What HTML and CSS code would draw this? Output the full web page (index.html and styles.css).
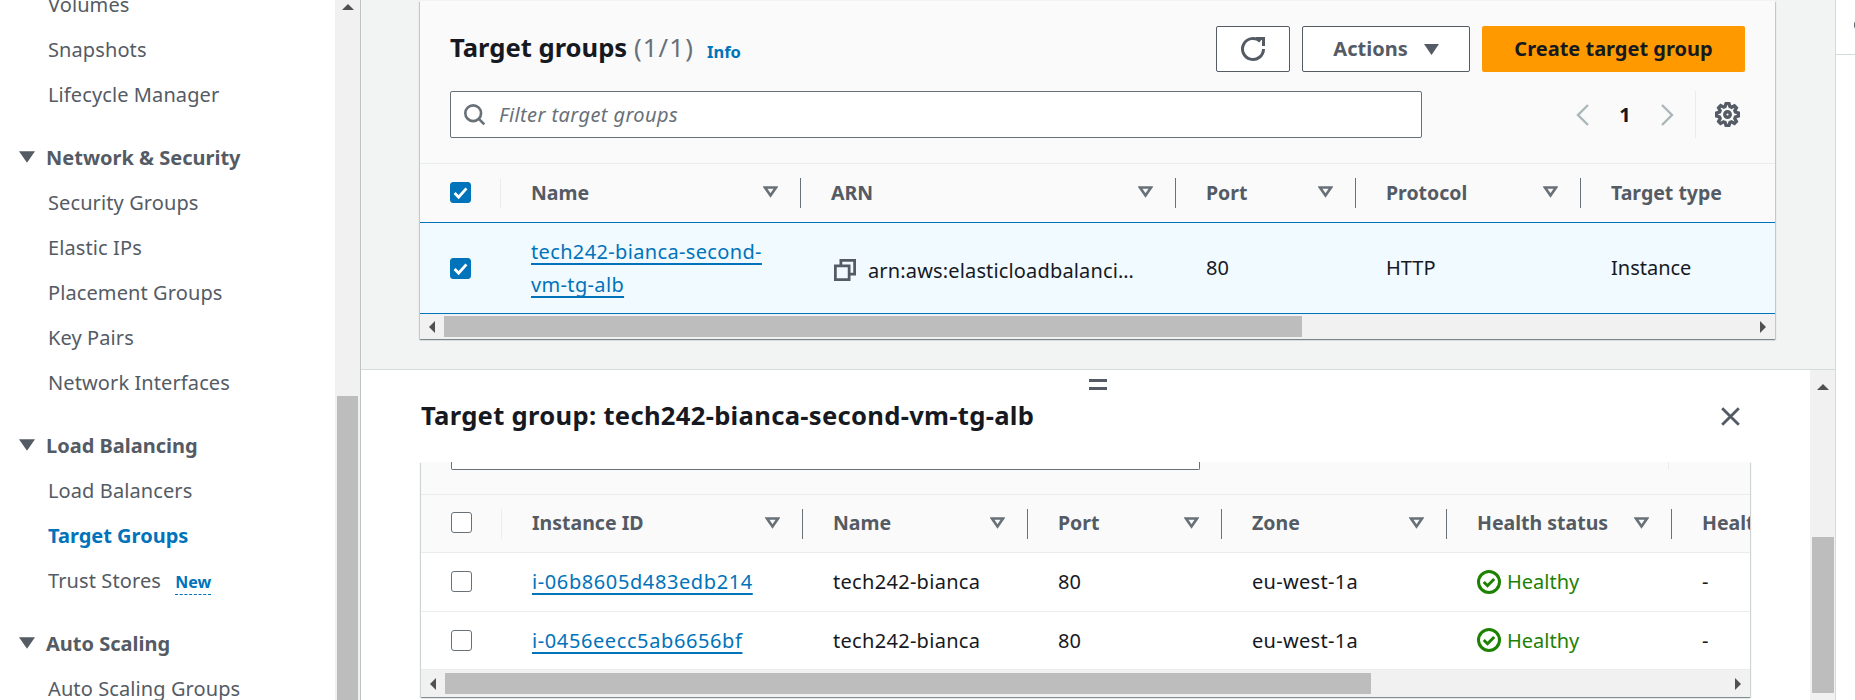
FILE: index.html
```html
<!DOCTYPE html>
<html lang="en">
<head>
    <meta charset="UTF-8">
    <title>Target groups</title>
    <link rel="stylesheet" href="styles.css">
</head>
<body>

<div class="app">

    <!-- Left navigation -->
    <nav class="side">
        <div class="side-list">
            <a class="side-item">Volumes</a>
            <a class="side-item">Snapshots</a>
            <a class="side-item">Lifecycle Manager</a>

            <div class="side-head"><svg class="caret-solid" viewBox="0 0 15 11"><path d="M0 0h15L7.5 11z"/></svg>Network &amp; Security</div>
            <a class="side-item">Security Groups</a>
            <a class="side-item">Elastic IPs</a>
            <a class="side-item">Placement Groups</a>
            <a class="side-item">Key Pairs</a>
            <a class="side-item">Network Interfaces</a>

            <div class="side-head"><svg class="caret-solid" viewBox="0 0 15 11"><path d="M0 0h15L7.5 11z"/></svg>Load Balancing</div>
            <a class="side-item">Load Balancers</a>
            <a class="side-item active">Target Groups</a>
            <a class="side-item">Trust Stores <span class="new-tag">New</span></a>

            <div class="side-head"><svg class="caret-solid" viewBox="0 0 15 11"><path d="M0 0h15L7.5 11z"/></svg>Auto Scaling</div>
            <a class="side-item">Auto Scaling Groups</a>
        </div>
    </nav>
    <div class="vscroll side-scroll">
        <span class="arrow-up"></span>
        <span class="vthumb side-thumb"></span>
    </div>

    <main class="main">
        <!-- Target groups list -->
        <section class="top-zone">
            <div class="card top-card">
                <div class="title-row">
                    <h1 class="card-title">Target groups <span class="count">(1/1)</span></h1>
                    <a class="info">Info</a>
                    <div class="actions">
                        <button class="btn btn-icon">
                            <svg class="icon" viewBox="0 0 16 16"><path d="M15 8a7 7 0 1 1-2.2-5.1"/><path d="M10 1h5v5"/></svg>
                        </button>
                        <button class="btn btn-actions">Actions <svg class="caret-btn" viewBox="0 0 15 11"><path d="M0 0h15L7.5 11z"/></svg></button>
                        <button class="btn btn-primary">Create target group</button>
                    </div>
                </div>
                <div class="filter-row">
                    <div class="filter">
                        <svg class="icon-search" viewBox="0 0 16 16"><circle cx="7" cy="7" r="6"/><path d="M11.5 11.5L15.5 15.5"/></svg>
                        <span class="placeholder">Filter target groups</span>
                    </div>
                    <div class="pager">
                        <svg class="chev" viewBox="0 0 16 24"><path d="M13 2L3 12l10 10"/></svg>
                        <span class="page-no">1</span>
                        <svg class="chev" viewBox="0 0 16 24"><path d="M3 2l10 10L3 22"/></svg>
                    </div>
                    <div class="prefs">
                        <svg class="icon-gear" viewBox="-1 -1 18 18"><path d="M13.3 5.2l1.1-2.1L13 1.7l-2.1 1.1c-.3-.2-.7-.3-1.1-.4L9 0H7l-.8 2.3c-.3.1-.7.2-1 .4L3.1 1.6 1.6 3.1l1.1 2.1c-.2.3-.3.7-.4 1L0 7v2l2.3.8c.1.4.3.7.4 1.1l-1.1 2.1 1.4 1.4 2.1-1.1c.3.2.7.3 1.1.4L7 16h2l.8-2.3c.4-.1.7-.3 1.1-.4l2.1 1.1 1.4-1.4-1.1-2.1c.2-.3.3-.7.4-1.1L16 9V7l-2.3-.8c-.1-.3-.2-.7-.4-1z"/><circle cx="8" cy="8" r="2"/></svg>
                    </div>
                </div>

                <div class="row head-row cols-top">
                    <div class="th th-check"><span class="check on"><svg viewBox="0 0 16 16"><path d="M3 8.5l3.4 3.4L13 4.5"/></svg></span></div>
                    <div class="th">Name <svg class="sort" viewBox="0 0 15 12"><path d="M2 1.5h11L7.5 9.5z"/></svg></div>
                    <div class="th">ARN <svg class="sort" viewBox="0 0 15 12"><path d="M2 1.5h11L7.5 9.5z"/></svg></div>
                    <div class="th">Port <svg class="sort" viewBox="0 0 15 12"><path d="M2 1.5h11L7.5 9.5z"/></svg></div>
                    <div class="th">Protocol <svg class="sort" viewBox="0 0 15 12"><path d="M2 1.5h11L7.5 9.5z"/></svg></div>
                    <div class="th th-last">Target type</div>
                </div>
                <div class="row selected-row cols-top">
                    <div class="td td-check"><span class="check on"><svg viewBox="0 0 16 16"><path d="M3 8.5l3.4 3.4L13 4.5"/></svg></span></div>
                    <div class="td"><a class="link link-wrap">tech242-bianca-second-vm-tg-alb</a></div>
                    <div class="td td-arn">
                        <svg class="icon-copy" viewBox="0 0 16 16"><path d="M1 5h10v10H1z"/><path d="M5 5V1h10v10h-4"/></svg>
                        <span class="arn">arn:aws:elasticloadbalanci…</span>
                    </div>
                    <div class="td td-plain">80</div>
                    <div class="td td-plain">HTTP</div>
                    <div class="td td-plain">Instance</div>
                </div>
                <div class="hscroll">
                    <span class="arrow-left"></span>
                    <span class="hthumb top-thumb"></span>
                    <span class="arrow-right"></span>
                </div>
            </div>
        </section>

        <!-- Split panel with the registered targets -->
        <section class="panel">
            <div class="panel-body">
                <span class="drag-handle"></span>
                <div class="panel-head">
                    <h2 class="panel-title">Target group: tech242-bianca-second-vm-tg-alb</h2>
                    <svg class="icon-close" viewBox="0 0 16 16"><path d="M1 1l14 14M15 1L1 15"/></svg>
                </div>
                <div class="card bottom-card">
                    <div class="filter-tail">
                        <span class="filter-end"></span>
                        <span class="tail-divider"></span>
                    </div>
                    <div class="row head-row head-row-b cols-bottom">
                        <div class="th th-check"><span class="check"></span></div>
                        <div class="th">Instance ID <svg class="sort" viewBox="0 0 15 12"><path d="M2 1.5h11L7.5 9.5z"/></svg></div>
                        <div class="th">Name <svg class="sort" viewBox="0 0 15 12"><path d="M2 1.5h11L7.5 9.5z"/></svg></div>
                        <div class="th">Port <svg class="sort" viewBox="0 0 15 12"><path d="M2 1.5h11L7.5 9.5z"/></svg></div>
                        <div class="th">Zone <svg class="sort" viewBox="0 0 15 12"><path d="M2 1.5h11L7.5 9.5z"/></svg></div>
                        <div class="th">Health status <svg class="sort" viewBox="0 0 15 12"><path d="M2 1.5h11L7.5 9.5z"/></svg></div>
                        <div class="th th-last">Health status details</div>
                    </div>
                    <div class="row body-row cols-bottom">
                        <div class="td td-check"><span class="check"></span></div>
                        <div class="td"><a class="link link-id">i-06b8605d483edb214</a></div>
                        <div class="td td-name">tech242-bianca</div>
                        <div class="td">80</div>
                        <div class="td td-name">eu-west-1a</div>
                        <div class="td healthy">
                            <svg class="icon-ok" viewBox="0 0 16 16"><circle cx="8" cy="8" r="7"/><path d="M4.5 8l2.5 2.5 4.5-4.5"/></svg>
                            Healthy
                        </div>
                        <div class="td">-</div>
                    </div>
                    <div class="row body-row cols-bottom">
                        <div class="td td-check"><span class="check"></span></div>
                        <div class="td"><a class="link link-id">i-0456eecc5ab6656bf</a></div>
                        <div class="td td-name">tech242-bianca</div>
                        <div class="td">80</div>
                        <div class="td td-name">eu-west-1a</div>
                        <div class="td healthy">
                            <svg class="icon-ok" viewBox="0 0 16 16"><circle cx="8" cy="8" r="7"/><path d="M4.5 8l2.5 2.5 4.5-4.5"/></svg>
                            Healthy
                        </div>
                        <div class="td">-</div>
                    </div>
                    <div class="hscroll hscroll-b">
                        <span class="arrow-left"></span>
                        <span class="hthumb bottom-thumb"></span>
                        <span class="arrow-right"></span>
                    </div>
                </div>
            </div>
            <div class="vscroll panel-scroll">
                <span class="arrow-up"></span>
                <span class="vthumb panel-thumb"></span>
            </div>
        </section>
    </main>

    <!-- Help rail, mostly cut off by the window edge -->
    <aside class="rail">
        <div class="rail-top"><span class="rail-icon"></span></div>
    </aside>

</div>

</body>
</html>
```

FILE: styles.css
```css
* {
    box-sizing: border-box;
}

body {
    margin: 0;
    height: 700px;
    overflow: hidden;
    font-family: "Noto Sans", Arial, sans-serif;
    font-size: 20px;
    color: #16191f;
    background: #fff;
}

.app {
    display: flex;
    height: 700px;
}

/* side nav */
.side {
    width: 335px;
    height: 700px;
    overflow: hidden;
    background: #fff;
    color: #545b64;
}

.side-list {
    margin-top: -18px;
}

.side-item {
    display: flex;
    align-items: center;
    height: 45px;
    padding-left: 48px;
    letter-spacing: 0.1px;
    white-space: pre;
}

.side-item.active {
    color: #0073bb;
    font-weight: 700;
    letter-spacing: 0;
}

.side-head {
    display: flex;
    align-items: center;
    height: 46px;
    margin-top: 17px;
    padding-left: 19px;
    font-weight: 700;
}

.caret-solid {
    width: 16px;
    height: 12px;
    margin-right: 11px;
    fill: #545b64;
}

.new-tag {
    margin-left: 9px;
    margin-top: 4px;
    padding-bottom: 1px;
    font-size: 16px;
    line-height: 22px;
    font-weight: 700;
    letter-spacing: 0;
    color: #0073bb;
    border-bottom: 1px dashed #0073bb;
}

/* scrollbars */
.vscroll {
    display: flex;
    flex-direction: column;
    align-items: center;
    flex-shrink: 0;
    background: #f1f1f1;
}

.side-scroll {
    width: 26px;
    height: 700px;
    border-right: 1px solid #bdc3c3;
}

.arrow-up {
    width: 0;
    height: 0;
    margin-top: 4px;
    border-left: 6px solid transparent;
    border-right: 6px solid transparent;
    border-bottom: 6px solid #505050;
}

.vthumb {
    display: block;
    width: 21px;
    background: #bdbdbd;
}

.side-thumb {
    height: 304px;
    margin-top: 386px;
}

.panel-scroll {
    width: 25px;
    padding-top: 10px;
}

.panel-thumb {
    width: 22px;
    height: 156px;
    margin-top: 147px;
}

.hscroll {
    display: flex;
    align-items: center;
    height: 25px;
    background: #f1f1f1;
}

.arrow-left {
    width: 0;
    height: 0;
    margin-left: 9px;
    margin-right: 9px;
    border-top: 6px solid transparent;
    border-bottom: 6px solid transparent;
    border-right: 6px solid #505050;
}

.arrow-right {
    width: 0;
    height: 0;
    margin-left: auto;
    margin-right: 9px;
    border-top: 6px solid transparent;
    border-bottom: 6px solid transparent;
    border-left: 6px solid #505050;
}

.hthumb {
    display: block;
    height: 21px;
    background: #bdbdbd;
}

.top-thumb {
    width: 858px;
}

.bottom-thumb {
    width: 926px;
}

/* main area */
.main {
    flex: 1;
    display: flex;
    flex-direction: column;
    min-width: 0;
    background: #f2f3f3;
}

.top-zone {
    height: 369px;
    padding: 1px 0 0 59px;
}

.card {
    background: #fafafa;
    box-shadow: 0 1px 1px 0 rgba(0, 28, 36, 0.3), 1px 1px 1px 0 rgba(0, 28, 36, 0.15), -1px 1px 1px 0 rgba(0, 28, 36, 0.15);
}

.top-card {
    width: 1355px;
    height: 338px;
    padding-top: 25px;
}

.title-row {
    display: flex;
    align-items: center;
    height: 46px;
    padding: 0 30px;
}

.card-title {
    margin: 0 0 2px;
    font-size: 25.6px;
    line-height: 34px;
    font-weight: 700;
}

.count {
    font-weight: 400;
    letter-spacing: 1.2px;
    color: #687078;
}

.info {
    margin-left: 13px;
    margin-top: 4px;
    font-size: 16.5px;
    font-weight: 700;
    color: #0073bb;
}

.actions {
    display: flex;
    gap: 12px;
    margin-left: auto;
}

.btn {
    display: flex;
    align-items: center;
    justify-content: center;
    height: 46px;
    padding: 0 0 2px;
    border: 1px solid #545b64;
    border-radius: 2px;
    background: #fff;
    font: inherit;
    font-weight: 700;
    color: #545b64;
}

.btn-icon {
    width: 74px;
    padding: 0;
}

.btn-actions {
    width: 168px;
    gap: 16px;
}

.btn-primary {
    width: 263px;
    border: none;
    background: #ff9900;
    color: #16191f;
}

.icon {
    width: 24px;
    height: 24px;
    fill: none;
    stroke: #545b64;
    stroke-width: 2;
    overflow: visible;
}

.caret-btn {
    width: 15px;
    height: 11px;
    margin-top: 2px;
    fill: #545b64;
}

.filter-row {
    display: flex;
    align-items: center;
    height: 47px;
    margin-top: 19px;
    padding-left: 30px;
}

.filter {
    display: flex;
    align-items: center;
    width: 972px;
    height: 47px;
    padding-left: 13px;
    background: #fff;
    border: 1px solid #687078;
    border-radius: 2px;
}

.icon-search {
    width: 21px;
    height: 21px;
    fill: none;
    stroke: #687078;
    stroke-width: 2;
}

.placeholder {
    margin-left: 14px;
    font-style: italic;
    letter-spacing: 0.4px;
    color: #687078;
}

.pager {
    display: flex;
    align-items: center;
    margin-left: 153px;
}

.chev {
    width: 16px;
    height: 24px;
    fill: none;
    stroke: #aab7b8;
    stroke-width: 2.4;
}

.page-no {
    width: 26px;
    margin: 0 21px;
    text-align: center;
    font-weight: 700;
}

.prefs {
    display: flex;
    align-items: center;
    height: 47px;
    margin-left: 20px;
    padding-left: 19px;
    border-left: 1px solid #eaeded;
}

.icon-gear {
    width: 25px;
    height: 25px;
    fill: none;
    stroke: #545b64;
    stroke-width: 2.4;
}

/* tables */
.row {
    display: grid;
    align-items: center;
}

.cols-top {
    grid-template-columns: 81px 300px 375px 180px 225px 1fr;
}

.cols-bottom {
    grid-template-columns: 81px 301px 225px 194px 225px 225px 200px;
    width: 1329px;
    overflow: hidden;
}

.head-row {
    height: 59px;
    margin-top: 25px;
    border-top: 1px solid #eaeded;
    font-size: 19.5px;
    font-weight: 700;
    color: #545b64;
}

.head-row-b {
    height: 58px;
    margin-top: 0;
}

.th {
    display: flex;
    align-items: center;
    justify-content: space-between;
    height: 30px;
    padding: 0 22px 2px 30px;
    border-right: 1px solid #687078;
    white-space: nowrap;
}

.th-check {
    border-right-color: #eaeded;
}

.th-last {
    border-right: none;
}

.sort {
    width: 15px;
    height: 12px;
    fill: none;
    stroke: #687078;
    stroke-width: 2.6;
}

.check {
    display: block;
    width: 21px;
    height: 21px;
    background: #fff;
    border: 1.5px solid #687078;
    border-radius: 3px;
}

.check.on {
    background: #0073bb;
    border-color: #0073bb;
}

.check svg {
    display: block;
    fill: none;
    stroke: #fff;
    stroke-width: 2.4;
}

.td {
    padding-left: 30px;
    white-space: nowrap;
}

.td-plain {
    padding-bottom: 2px;
}

.selected-row {
    height: 92px;
    background: #f1faff;
    border: 1px solid #0073bb;
    border-width: 1px 0;
}

.link {
    color: #0073bb;
    text-decoration: underline;
    text-decoration-thickness: 2px;
    text-underline-offset: 4px;
    text-decoration-skip-ink: none;
}

.link-id {
    letter-spacing: 0.6px;
}

.td-name {
    letter-spacing: 0.3px;
}

.link-wrap {
    display: block;
    width: 240px;
    margin-top: -1px;
    letter-spacing: 0.35px;
    white-space: normal;
    line-height: 33px;
}

.td-arn {
    display: flex;
    align-items: center;
    margin-top: 4px;
    padding-left: 33px;
}

.icon-copy {
    flex-shrink: 0;
    width: 22px;
    height: 22px;
    fill: none;
    stroke: #545b64;
    stroke-width: 2;
}

.arn {
    margin-left: 12px;
    letter-spacing: 0.15px;
}

/* split panel */
.panel {
    display: flex;
    flex: 1;
    min-height: 0;
    background: #fff;
    border-top: 1px solid #d5dbdb;
}

.panel-body {
    position: relative;
    flex: 1;
    min-width: 0;
    overflow: hidden;
}

.drag-handle {
    position: absolute;
    top: 9px;
    left: 728px;
    width: 18px;
    height: 11px;
    border-top: 3px solid #545b64;
    border-bottom: 3px solid #545b64;
}

.panel-head {
    display: flex;
    align-items: center;
    justify-content: space-between;
    height: 92px;
    padding: 0 70px 0 60px;
}

.panel-title {
    margin: 0;
    font-size: 25.6px;
    line-height: 34px;
    font-weight: 700;
    letter-spacing: 0.3px;
}

.icon-close {
    width: 19px;
    height: 19px;
    fill: none;
    stroke: #545b64;
    stroke-width: 2.4;
}

.bottom-card {
    width: 1329px;
    height: 235px;
    margin-left: 60px;
    overflow: hidden;
}

.filter-tail {
    display: flex;
    height: 32px;
    padding-left: 30px;
}

.filter-end {
    width: 749px;
    height: 8px;
    background: #fff;
    border: 1px solid #687078;
    border-top: none;
    border-radius: 0 0 2px 2px;
}

.tail-divider {
    width: 1px;
    height: 8px;
    margin-left: 468px;
    background: #eaeded;
}

.body-row {
    height: 58.5px;
    background: #fff;
    border-top: 1px solid #eaeded;
}

.healthy {
    display: flex;
    align-items: center;
    gap: 6px;
    color: #1d8102;
}

.icon-ok {
    width: 24px;
    height: 24px;
    fill: none;
    stroke: #1d8102;
    stroke-width: 2;
}

.hscroll-b {
    height: 28px;
    border-top: 1px solid #eaeded;
}

/* right rail */
.rail {
    width: 20px;
    flex-shrink: 0;
    overflow: hidden;
    background: #fff;
    border-left: 1px solid #d5dbdb;
}

.rail-top {
    height: 55px;
    padding: 18px 0 0 18px;
    border-bottom: 1px solid #d5dbdb;
}

.rail-icon {
    display: block;
    width: 14px;
    height: 14px;
    border: 2px solid #545b64;
    border-radius: 50%;
}
```
